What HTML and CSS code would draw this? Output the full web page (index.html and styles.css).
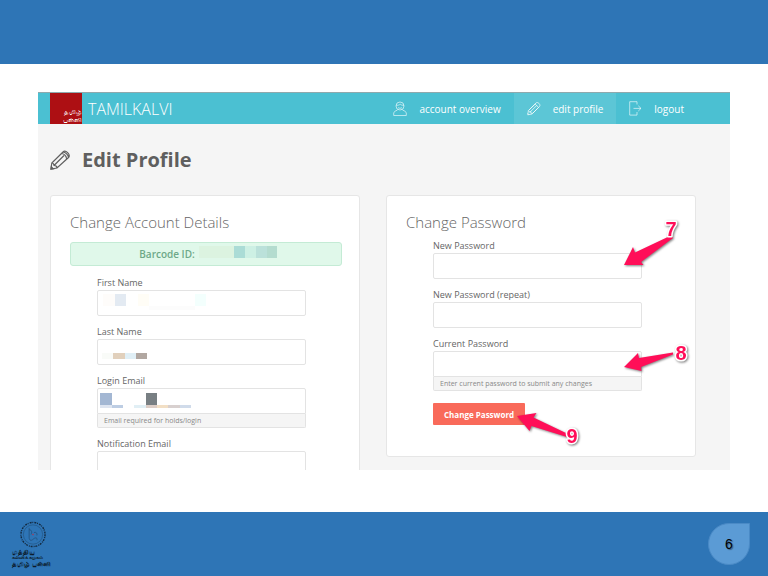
FILE: index.html
```html
<!DOCTYPE html>
<html lang="en">
<head>
    <meta charset="UTF-8">
    <meta name="viewport" content="width=device-width, initial-scale=1.0">
    <title>Edit Profile</title>
    <link rel="stylesheet" href="styles.css">
</head>
<body>

<div class="slide">
    <div class="slide-header"></div>

    <main class="slide-body">
        <div class="screen">
            <header class="topbar">
                <a href="#" class="brand">
                    <span class="brand-logo" lang="ta"><span>தமிழ்</span><span>பள்ளி</span></span>
                    <span class="brand-name">TAMILKALVI</span>
                </a>
                <nav class="menu">
                    <a href="#">
                        <svg width="14" height="16" viewBox="0 0 14 16" fill="none" stroke="currentColor" stroke-width="0.8" stroke-opacity="0.75">
                            <circle cx="7" cy="5" r="4"/>
                            <path d="M3.200 4.200c2 .3 3-.2 4-1 1 .9 2.200 1.200 3.800 1M5 6.500c1 1 3 1 4 0M5 8.400c-.3 1.300-3.700 1-4.300 3.600v2.500h12.600V12c-.6-2.600-4-2.300-4.300-3.600"/>
                        </svg>
                        account overview
                    </a>
                    <a href="#" class="active">
                        <svg width="14" height="15" viewBox="0 0 20 20" fill="none" stroke="currentColor" stroke-width="1.200" stroke-opacity="0.8">
                            <path d="M1 19l1-6L13 2c2-2 7 2 5 5L7 18zM2 13l5 5M11.500 3.500l5 5M4 15.500L14 5.500M5 14l2 2M3 12L12 3.500M8 17l8.500-8.500M1 17l2 2"/>
                        </svg>
                        edit profile
                    </a>
                    <a href="#">
                        <svg width="13" height="15" viewBox="0 0 13 15" fill="none" stroke="currentColor" stroke-width="0.8" stroke-opacity="0.75">
                            <path d="M8 3.500V.7H.7v13.400H8V11M4.500 7.400h7.500M9.300 4.800L12 7.400 9.300 10"/>
                        </svg>
                        logout
                    </a>
                </nav>
            </header>

            <h1 class="page-title">
                <svg width="20" height="20" viewBox="0 0 20 20" fill="none" stroke="currentColor" stroke-width="1.200">
                    <path d="M1 19l.8-6L13 2c2.500-2.500 8 2.500 5.500 5.500L7 18zM1.800 13C4 12.800 3.800 14.300 4 15.500c1.500 0 3 .5 3 2.500M11.500 3.500c2.500 0 5 2.500 5 5M13 2c2.500 0 5.500 3 5.500 5.500M4 15.500L14 5.500"/>
                    <path d="M1 19l.3-2.300 2 2z" fill="currentColor"/>
                </svg>
                Edit Profile
            </h1>

            <div class="cards">
                <form class="card">
                    <h2>Change Account Details</h2>
                    <div class="barcode">
                        <span>Barcode ID:</span>
                        <svg width="78" height="12" viewBox="0 0 78 12">
                            <rect width="35" height="12" fill="#dcf3e0"/>
                            <rect x="35" width="11" height="12" fill="#abdcd6"/>
                            <rect x="46" width="11" height="12" fill="#cdf0e4"/>
                            <rect x="57" width="11" height="12" fill="#bbe1da"/>
                            <rect x="68" width="10" height="12" fill="#b4dccf"/>
                        </svg>
                    </div>
                    <div class="field">
                        <label for="first-name">First Name</label>
                        <input type="text" id="first-name">
                        <svg class="mosaic" width="110" height="24" viewBox="0 0 110 24">
                            <rect x="6" y="4" width="12" height="12" fill="#fefcfa"/>
                            <rect x="18" y="4" width="11" height="12" fill="#e3eaf2"/>
                            <rect x="41" y="4" width="11" height="12" fill="#fffdf6"/>
                            <rect x="98" y="4" width="11" height="12" fill="#f3fffd"/>
                            <rect x="52" y="16" width="46" height="4" fill="#fcfcfc"/>
                        </svg>
                    </div>
                    <div class="field">
                        <label for="last-name">Last Name</label>
                        <input type="text" id="last-name">
                        <svg class="mosaic" width="110" height="24" viewBox="0 0 110 24">
                            <rect x="5" y="14" width="11" height="6" fill="#f9fbf8"/>
                            <rect x="16" y="14" width="12" height="6" fill="#e1d0bc"/>
                            <rect x="28" y="14" width="11" height="6" fill="#e0eff6"/>
                            <rect x="39" y="14" width="11" height="6" fill="#b1a7a1"/>
                        </svg>
                    </div>
                    <div class="field">
                        <label for="login-email">Login Email</label>
                        <input type="text" id="login-email" class="has-hint">
                        <div class="hint">Email required for holds/login</div>
                        <svg class="mosaic" width="110" height="24" viewBox="0 0 110 24">
                            <rect x="3" y="5" width="12" height="12" fill="#a3b7d3"/>
                            <rect x="49" y="5" width="11" height="12" fill="#787f83"/>
                            <rect x="3" y="17" width="12" height="3" fill="#dde4f0"/>
                            <rect x="15" y="17" width="11" height="3" fill="#bdcde3"/>
                            <rect x="37" y="17" width="12" height="3" fill="#e1eff5"/>
                            <rect x="49" y="17" width="11" height="3" fill="#dccdc6"/>
                            <rect x="60" y="17" width="11" height="3" fill="#f2dfc5"/>
                            <rect x="71" y="17" width="12" height="3" fill="#d8d0cf"/>
                            <rect x="83" y="17" width="11" height="3" fill="#d0dbea"/>
                        </svg>
                    </div>
                    <div class="field">
                        <label for="notify-email">Notification Email</label>
                        <input type="text" id="notify-email">
                    </div>
                </form>

                <form class="card">
                    <h2>Change Password</h2>
                    <div class="field">
                        <label for="new-password">New Password</label>
                        <input type="password" id="new-password">
                        <svg class="callout callout-7" width="72" height="56" viewBox="0 0 72 56">
                            <path d="M4 48L13 30l2 5.500 36-17 2 2.500-32 24 2.500 3z"/>
                            <text x="51" y="19">7</text>
                        </svg>
                    </div>
                    <div class="field">
                        <label for="repeat-password">New Password (repeat)</label>
                        <input type="password" id="repeat-password">
                    </div>
                    <div class="field">
                        <label for="current-password">Current Password</label>
                        <input type="password" id="current-password" class="has-hint">
                        <div class="hint">Enter current password to submit any changes</div>
                        <svg class="callout callout-8" width="72" height="36" viewBox="0 0 72 36">
                            <path d="M4 27l14-14 1 5 34-5.500v2L21 27l.5 4z"/>
                            <text x="61" y="20">8</text>
                        </svg>
                    </div>
                    <div class="actions">
                        <button type="button">Change Password</button>
                        <svg class="callout callout-9" width="72" height="42" viewBox="0 0 72 42">
                            <path d="M4 8l19.500-3-3 4.500L55 26l-1 3-35.500-11-2 5z"/>
                            <text x="59" y="35">9</text>
                        </svg>
                    </div>
                </form>
            </div>
        </div>
    </main>

    <footer class="slide-footer">
        <div class="seal" lang="ta">
            <svg width="28" height="27" viewBox="0 0 28 28" fill="none" stroke="#13293f">
                <circle cx="14" cy="14" r="12.500" stroke-width="1.400" stroke-dasharray="2 0.8 1 1.200"/>
                <circle cx="14" cy="14" r="10" stroke-width="0.3"/>
                <path d="M10 7v10c0 3 2 4 4 2 3-3 5-1 4 1M10 9c3 0 3 3 2 5M15 12c2-1 4 1 3 3" stroke="#1f4a75" stroke-width="0.7"/>
                <circle cx="14" cy="14" r="0.5" stroke="#a23a5a"/>
            </svg>
            <span>மத்திய</span>
            <span class="small">கல்விக் கழகம்</span>
            <span>தமிழ் பள்ளி</span>
        </div>
        <div class="page-number">6</div>
    </footer>
</div>

</body>
</html>
```
FILE: styles.css
```css
* {
    box-sizing: border-box;
}
body {
    margin: 0;
    font-family: "Open Sans", "Noto Sans", sans-serif;
    color: #666;
    background: #fff;
}
a {
    color: inherit;
    text-decoration: none;
}
svg {
    flex: none;
}
.slide {
    display: flex;
    flex-direction: column;
    height: 100vh;
}
.slide-header,
.slide-footer {
    flex: none;
    height: 64px;
    background: #2e75b6;
}
.slide-body {
    flex: 1;
    min-height: 0;
    display: flex;
    padding: 28px 38px 42px;
}

/* captured screen */
.screen {
    flex: 1;
    overflow: hidden;
    background: #f5f5f5;
}
.topbar {
    display: flex;
    justify-content: space-between;
    height: 32px;
    padding: 0 33px 0 12px;
    border-top: 1px solid #8fa9ad;
    background: #4bc0d2;
    color: #fff;
}
.brand {
    display: flex;
    align-items: center;
    gap: 6px;
    font-size: 16px;
    font-weight: 300;
}
.brand-logo {
    display: flex;
    flex-direction: column;
    align-items: flex-end;
    width: 32px;
    height: 31px;
    padding-top: 15px;
    background: #ad0f13;
    font-size: 7px;
    font-weight: 400;
    line-height: 8px;
}
.menu {
    display: flex;
    font-size: 10px;
}
.menu a {
    display: flex;
    align-items: center;
    gap: 12px;
    padding: 0 13px;
}
.menu .active {
    background: #5cc6d6;
}
.page-title {
    display: flex;
    align-items: center;
    gap: 12px;
    height: 71px;
    margin: 0;
    padding: 0 12px;
    font-size: 20px;
    color: #5f5f5f;
}
.cards {
    display: grid;
    grid-template-columns: 1fr 1fr;
    gap: 26px;
    align-items: start;
    padding: 0 34px 0 12px;
}
.card {
    padding: 14px 17px 31px 19px;
    border: 1px solid #e6e6e6;
    border-radius: 3px;
    background: #fff;
}
.card h2 {
    margin: 0 0 5px;
    font-size: 15px;
    font-weight: 300;
    line-height: 24px;
}
.barcode {
    display: flex;
    justify-content: center;
    gap: 4px;
    height: 24px;
    margin: 8px 0 10px;
    padding: 3px 0 0 4px;
    border: 1px solid #c4ebd5;
    border-radius: 3px;
    background: #e0f8ea;
    font-size: 10px;
    font-weight: 600;
    line-height: 16px;
    color: #6da888;
}

/* form fields */
.field {
    position: relative;
    margin: 0 36px 9px 27px;
}
.field label {
    display: block;
    font-size: 9px;
    line-height: 14px;
}
.field input {
    display: block;
    width: 100%;
    height: 26px;
    padding: 0 6px;
    border: 1px solid #e3e3e3;
    border-radius: 2px;
    background: #fff;
}
.field .has-hint {
    border-radius: 2px 2px 0 0;
}
.hint {
    padding: 0 6px;
    border: 1px solid #e3e3e3;
    border-top: 0;
    border-radius: 0 0 2px 2px;
    background: #f5f5f5;
    font-size: 7px;
    line-height: 13px;
    color: #888;
}
.mosaic {
    position: absolute;
    top: 14px;
    left: 0;
}
.actions {
    position: relative;
    width: fit-content;
    margin: 12px 0 0 27px;
}
.actions button {
    display: block;
    height: 22px;
    padding: 0 11px;
    border: 0;
    border-radius: 1px;
    background: #f96a5a;
    font-family: inherit;
    font-size: 8px;
    font-weight: 700;
    color: #fff;
}

/* numbered arrows */
.callout {
    position: absolute;
    fill: #ff0e58;
    filter: drop-shadow(1px 1px 1px rgba(0, 0, 0, 0.5));
}
.callout text {
    font-family: "Liberation Sans", sans-serif;
    font-size: 20px;
    font-weight: 700;
    text-anchor: middle;
    stroke: #fff;
    stroke-width: 3px;
    stroke-linejoin: round;
    paint-order: stroke;
}
.callout-7 {
    top: -22px;
    right: -50px;
}
.callout-8 {
    top: 3px;
    right: -50px;
}
.callout-9 {
    top: 5px;
    left: calc(100% - 12px);
}

/* footer */
.slide-footer {
    display: flex;
    align-items: center;
    justify-content: space-between;
    padding: 0 18px 0 12px;
}
.seal {
    display: flex;
    flex-direction: column;
    width: 42px;
    font-size: 7px;
    font-weight: 700;
    line-height: 7px;
    white-space: nowrap;
    color: #0b1a2a;
}
.seal svg {
    align-self: center;
}
.seal .small {
    font-size: 5px;
    line-height: 5px;
}
.page-number {
    width: 42px;
    height: 42px;
    border: 1px solid #4a8ac6;
    border-radius: 50% 0 50% 50%;
    background: #5b9bd5;
    font-family: "Liberation Sans", sans-serif;
    font-size: 14px;
    line-height: 40px;
    text-align: center;
    color: #000;
    text-shadow: 1px 1px 1px rgba(0, 0, 0, 0.4);
}
```
